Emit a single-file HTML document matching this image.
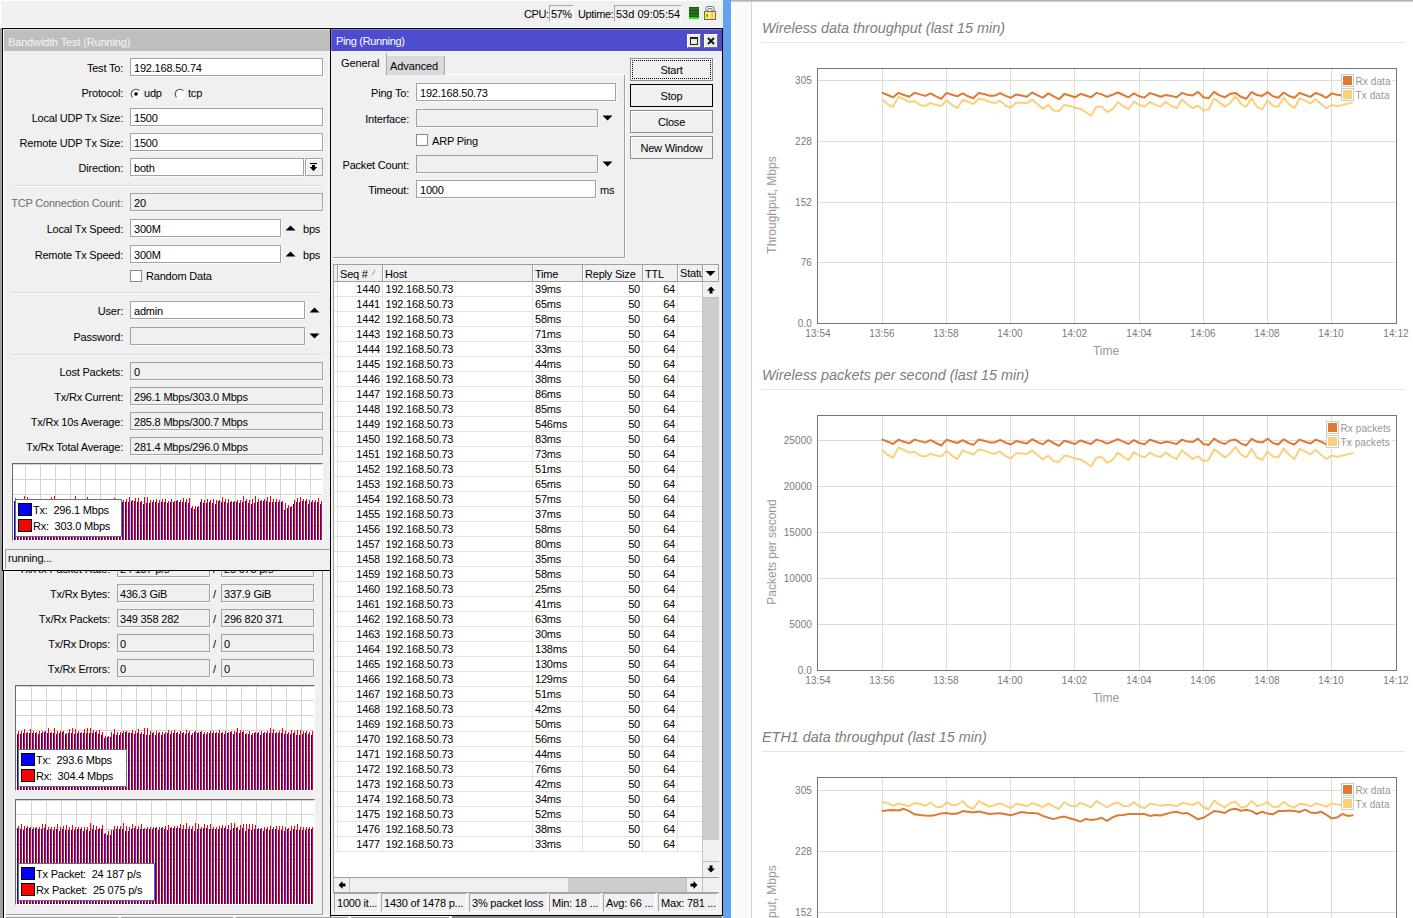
<!DOCTYPE html><html><head><meta charset="utf-8"><title>WinBox</title><style>
*{box-sizing:border-box;margin:0;padding:0}
html,body{width:1413px;height:918px;overflow:hidden;background:#f0f0f0}
body{position:relative;font-family:"Liberation Sans",sans-serif;font-size:11px;color:#000}
.a{position:absolute}
.t{position:absolute;white-space:nowrap;font-size:11px;line-height:14px;height:14px;letter-spacing:-0.2px}
.r{text-align:right}
.in{position:absolute;background:#fff;border:1px solid #a2a2a2;box-shadow:1px 1px 0 #fbfbfb;font-size:11px;line-height:16px;padding-top:1px;padding-left:3px;white-space:nowrap;letter-spacing:-0.2px;overflow:hidden}
.ro{background:#f0f0f0}
.sep{position:absolute;height:2px;border-top:1px solid #dadada;border-bottom:1px solid #fcfcfc}
.btn{position:absolute;width:83px;height:23px;border:1px solid #8e8e8e;background:#f0f0f0;text-align:center;line-height:22px;font-size:11px;letter-spacing:-0.2px;box-shadow:inset 1px 1px 0 #fff}
.cb{position:absolute;width:12px;height:12px;border:1px solid #8a8a8a;background:#fff}
.sw{position:absolute;width:14px;height:13px;border:1px solid #000}
.lg{position:absolute;background:#fff;border:1px solid #707070}
.gr{position:absolute;background:#fff;border-top:1px solid #696969;border-left:1px solid #696969;border-right:1px solid #fff;border-bottom:1px solid #fff;overflow:hidden}
.cl{position:absolute;font-size:10px;color:#7a7a7a;white-space:nowrap;line-height:12px;height:12px;letter-spacing:0.1px}
.ct{position:absolute;font-size:14.4px;font-style:italic;color:#7d7d7d;white-space:nowrap;line-height:18px;height:18px}
.hr{position:absolute;height:1px;background:#e4e4e4}
.sc{position:absolute;height:19px;border:1px solid #a8a8a8;border-right-color:#fff;border-bottom-color:#fff;font-size:11px;line-height:18px;padding-left:2px;white-space:nowrap;overflow:hidden;letter-spacing:-0.2px}
</style></head><body>
<div class="a" style="left:0px;top:0px;width:723px;height:28px;background:#f0f0f0;border-top:1px solid #fff;border-bottom:1px solid #fbfbfb;border-left:1px solid #fff"></div>
<div class="a" style="left:0px;top:28px;width:3px;height:890px;background:#a0a0a0"></div>
<div class="a" style="left:3px;top:560px;width:328px;height:358px;background:#f0f0f0;border-left:1px solid #000;border-right:1px solid #000"></div>
<div class="a" style="left:4px;top:560px;width:2px;height:358px;background:#fff"></div>
<div class="a" style="left:322px;top:571px;width:1px;height:343px;background:#a0a0a0"></div>
<div class="a" style="left:323px;top:571px;width:7px;height:343px;background:#f0f0f0"></div>
<div class="a" style="left:6px;top:914px;width:317px;height:1px;background:#a0a0a0"></div>
<div class="a" style="left:6px;top:915px;width:324px;height:1px;background:#fdfdfd"></div>
<div class="a" style="left:6px;top:917px;width:112px;height:1px;background:#a0a0a0"></div>
<div class="a" style="left:121px;top:917px;width:112px;height:1px;background:#a0a0a0"></div>
<div class="a" style="left:236px;top:917px;width:112px;height:1px;background:#a0a0a0"></div>
<div class="a" style="left:351px;top:917px;width:98px;height:1px;background:#a0a0a0"></div>
<div class="a" style="left:452px;top:916px;width:270px;height:2px;background:#8a8a8a"></div>
<div class="t r " style="left:-190px;width:300px;top:562px;">Tx/Rx Packet Rate:</div>
<div class="in ro" style="left:117px;top:559px;width:93px;height:18px;padding-left:2px">24 187 p/s</div>
<div class="t " style="left:213px;top:562px;">/</div>
<div class="in ro" style="left:221px;top:559px;width:93px;height:18px;padding-left:2px">25 075 p/s</div>
<div class="t r " style="left:-190px;width:300px;top:587px;">Tx/Rx Bytes:</div>
<div class="in ro" style="left:117px;top:584px;width:93px;height:18px;padding-left:2px">436.3 GiB</div>
<div class="t " style="left:213px;top:587px;">/</div>
<div class="in ro" style="left:221px;top:584px;width:93px;height:18px;padding-left:2px">337.9 GiB</div>
<div class="t r " style="left:-190px;width:300px;top:612px;">Tx/Rx Packets:</div>
<div class="in ro" style="left:117px;top:609px;width:93px;height:18px;padding-left:2px">349 358 282</div>
<div class="t " style="left:213px;top:612px;">/</div>
<div class="in ro" style="left:221px;top:609px;width:93px;height:18px;padding-left:2px">296 820 371</div>
<div class="t r " style="left:-190px;width:300px;top:637px;">Tx/Rx Drops:</div>
<div class="in ro" style="left:117px;top:634px;width:93px;height:18px;padding-left:2px">0</div>
<div class="t " style="left:213px;top:637px;">/</div>
<div class="in ro" style="left:221px;top:634px;width:93px;height:18px;padding-left:2px">0</div>
<div class="t r " style="left:-190px;width:300px;top:662px;">Tx/Rx Errors:</div>
<div class="in ro" style="left:117px;top:659px;width:93px;height:18px;padding-left:2px">0</div>
<div class="t " style="left:213px;top:662px;">/</div>
<div class="in ro" style="left:221px;top:659px;width:93px;height:18px;padding-left:2px">0</div>
<div class="gr" style="left:15px;top:685px;width:300px;height:106px"><svg width="298" height="104" shape-rendering="crispEdges" style="display:block"><path d="M15.5 0V104M30.5 0V104M45.5 0V104M60.5 0V104M75.5 0V104M90.5 0V104M105.5 0V104M120.5 0V104M135.5 0V104M150.5 0V104M165.5 0V104M180.5 0V104M195.5 0V104M210.5 0V104M225.5 0V104M240.5 0V104M255.5 0V104M270.5 0V104M285.5 0V104M0 0.5H298M0 14.5H298M0 29.5H298M0 44.5H298M0 59.5H298M0 74.5H298M0 89.5H298" stroke="#d4d4d4" stroke-width="1" fill="none"/><path d="M1.5 48V104M4.5 48V104M7.5 47V104M10.5 47V104M13.5 47V104M16.5 47V104M19.5 47V104M22.5 48V104M25.5 47V104M28.5 46V104M31.5 47V104M34.5 47V104M37.5 47V104M40.5 48V104M43.5 47V104M46.5 46V104M49.5 48V104M52.5 47V104M55.5 47V104M58.5 48V104M61.5 47V104M64.5 47V104M67.5 47V104M70.5 47V104M73.5 47V104M76.5 47V104M79.5 46V104M82.5 48V104M85.5 49V104M88.5 52V104M91.5 51V104M94.5 51V104M97.5 48V104M100.5 49V104M103.5 49V104M106.5 47V104M109.5 46V104M112.5 47V104M115.5 47V104M118.5 48V104M121.5 47V104M124.5 48V104M127.5 48V104M130.5 49V104M133.5 49V104M136.5 47V104M139.5 49V104M142.5 47V104M145.5 49V104M148.5 48V104M151.5 47V104M154.5 48V104M157.5 47V104M160.5 47V104M163.5 48V104M166.5 47V104M169.5 48V104M172.5 47V104M175.5 49V104M178.5 46V104M181.5 47V104M184.5 46V104M187.5 48V104M190.5 48V104M193.5 47V104M196.5 47V104M199.5 47V104M202.5 47V104M205.5 47V104M208.5 48V104M211.5 47V104M214.5 46V104M217.5 48V104M220.5 46V104M223.5 47V104M226.5 46V104M229.5 48V104M232.5 48V104M235.5 49V104M238.5 47V104M241.5 47V104M244.5 49V104M247.5 47V104M250.5 47V104M253.5 47V104M256.5 47V104M259.5 47V104M262.5 47V104M265.5 47V104M268.5 48V104M271.5 48V104M274.5 48V104M277.5 47V104M280.5 49V104M283.5 49V104M286.5 48V104M289.5 47V104M292.5 48V104M295.5 49V104" stroke="#0000ff" stroke-width="1" fill="none"/><path d="M2.5 45V104M5.5 45V104M8.5 43V104M11.5 46V104M14.5 43V104M17.5 45V104M20.5 46V104M23.5 45V104M26.5 45V104M29.5 45V104M32.5 42V104M35.5 46V104M38.5 42V104M41.5 45V104M44.5 45V104M47.5 45V104M50.5 47V104M53.5 43V104M56.5 42V104M59.5 43V104M62.5 45V104M65.5 46V104M68.5 43V104M71.5 42V104M74.5 42V104M77.5 44V104M80.5 45V104M83.5 44V104M86.5 46V104M89.5 50V104M92.5 50V104M95.5 46V104M98.5 43V104M101.5 46V104M104.5 46V104M107.5 45V104M110.5 45V104M113.5 46V104M116.5 44V104M119.5 45V104M122.5 43V104M125.5 46V104M128.5 42V104M131.5 42V104M134.5 45V104M137.5 46V104M140.5 45V104M143.5 46V104M146.5 46V104M149.5 46V104M152.5 44V104M155.5 45V104M158.5 44V104M161.5 46V104M164.5 45V104M167.5 46V104M170.5 44V104M173.5 45V104M176.5 47V104M179.5 45V104M182.5 46V104M185.5 45V104M188.5 46V104M191.5 46V104M194.5 45V104M197.5 45V104M200.5 46V104M203.5 44V104M206.5 46V104M209.5 45V104M212.5 46V104M215.5 45V104M218.5 45V104M221.5 42V104M224.5 44V104M227.5 45V104M230.5 47V104M233.5 45V104M236.5 47V104M239.5 46V104M242.5 46V104M245.5 45V104M248.5 46V104M251.5 45V104M254.5 42V104M257.5 43V104M260.5 46V104M263.5 45V104M266.5 42V104M269.5 45V104M272.5 46V104M275.5 44V104M278.5 45V104M281.5 44V104M284.5 44V104M287.5 45V104M290.5 45V104M293.5 46V104M296.5 45V104" stroke="#ff0000" stroke-width="1" fill="none"/></svg></div>
<div class="lg" style="left:18px;top:749px;width:109px;height:38px"></div>
<div class="sw" style="left:21px;top:753px;background:#0000ff"></div>
<div class="sw" style="left:21px;top:769px;background:#ff0000"></div>
<div class="t " style="left:36px;top:753px;">Tx:&nbsp; 293.6 Mbps</div>
<div class="t " style="left:36px;top:769px;">Rx:&nbsp; 304.4 Mbps</div>
<div class="gr" style="left:15px;top:799px;width:300px;height:106px"><svg width="298" height="104" shape-rendering="crispEdges" style="display:block"><path d="M15.5 0V104M30.5 0V104M45.5 0V104M60.5 0V104M75.5 0V104M90.5 0V104M105.5 0V104M120.5 0V104M135.5 0V104M150.5 0V104M165.5 0V104M180.5 0V104M195.5 0V104M210.5 0V104M225.5 0V104M240.5 0V104M255.5 0V104M270.5 0V104M285.5 0V104M0 0.5H298M0 14.5H298M0 29.5H298M0 44.5H298M0 59.5H298M0 74.5H298M0 89.5H298" stroke="#d4d4d4" stroke-width="1" fill="none"/><path d="M1.5 28V104M4.5 29V104M7.5 30V104M10.5 28V104M13.5 28V104M16.5 29V104M19.5 28V104M22.5 29V104M25.5 29V104M28.5 28V104M31.5 30V104M34.5 29V104M37.5 30V104M40.5 29V104M43.5 31V104M46.5 29V104M49.5 30V104M52.5 30V104M55.5 30V104M58.5 30V104M61.5 29V104M64.5 29V104M67.5 31V104M70.5 30V104M73.5 31V104M76.5 29V104M79.5 30V104M82.5 29V104M85.5 29V104M88.5 34V104M91.5 35V104M94.5 35V104M97.5 30V104M100.5 29V104M103.5 29V104M106.5 29V104M109.5 31V104M112.5 31V104M115.5 29V104M118.5 28V104M121.5 29V104M124.5 29V104M127.5 29V104M130.5 29V104M133.5 29V104M136.5 29V104M139.5 28V104M142.5 30V104M145.5 28V104M148.5 29V104M151.5 30V104M154.5 28V104M157.5 28V104M160.5 28V104M163.5 28V104M166.5 29V104M169.5 29V104M172.5 29V104M175.5 29V104M178.5 31V104M181.5 29V104M184.5 29V104M187.5 28V104M190.5 28V104M193.5 29V104M196.5 29V104M199.5 29V104M202.5 29V104M205.5 28V104M208.5 28V104M211.5 29V104M214.5 30V104M217.5 28V104M220.5 28V104M223.5 30V104M226.5 28V104M229.5 31V104M232.5 29V104M235.5 30V104M238.5 29V104M241.5 29V104M244.5 29V104M247.5 31V104M250.5 29V104M253.5 30V104M256.5 29V104M259.5 29V104M262.5 30V104M265.5 30V104M268.5 31V104M271.5 29V104M274.5 31V104M277.5 29V104M280.5 30V104M283.5 30V104M286.5 30V104M289.5 30V104M292.5 29V104M295.5 29V104" stroke="#0000ff" stroke-width="1" fill="none"/><path d="M2.5 26V104M5.5 24V104M8.5 26V104M11.5 26V104M14.5 27V104M17.5 27V104M20.5 27V104M23.5 27V104M26.5 24V104M29.5 24V104M32.5 27V104M35.5 27V104M38.5 27V104M41.5 24V104M44.5 27V104M47.5 26V104M50.5 25V104M53.5 27V104M56.5 25V104M59.5 27V104M62.5 27V104M65.5 27V104M68.5 27V104M71.5 27V104M74.5 23V104M77.5 25V104M80.5 26V104M83.5 28V104M86.5 25V104M89.5 33V104M92.5 31V104M95.5 30V104M98.5 26V104M101.5 26V104M104.5 26V104M107.5 23V104M110.5 26V104M113.5 27V104M116.5 24V104M119.5 26V104M122.5 26V104M125.5 24V104M128.5 28V104M131.5 27V104M134.5 27V104M137.5 27V104M140.5 27V104M143.5 27V104M146.5 27V104M149.5 26V104M152.5 25V104M155.5 27V104M158.5 26V104M161.5 26V104M164.5 24V104M167.5 25V104M170.5 23V104M173.5 26V104M176.5 26V104M179.5 23V104M182.5 24V104M185.5 27V104M188.5 24V104M191.5 25V104M194.5 24V104M197.5 27V104M200.5 27V104M203.5 26V104M206.5 25V104M209.5 26V104M212.5 25V104M215.5 23V104M218.5 23V104M221.5 27V104M224.5 25V104M227.5 24V104M230.5 24V104M233.5 24V104M236.5 24V104M239.5 25V104M242.5 28V104M245.5 28V104M248.5 27V104M251.5 27V104M254.5 26V104M257.5 27V104M260.5 26V104M263.5 26V104M266.5 26V104M269.5 27V104M272.5 28V104M275.5 26V104M278.5 26V104M281.5 24V104M284.5 27V104M287.5 27V104M290.5 27V104M293.5 27V104M296.5 27V104" stroke="#ff0000" stroke-width="1" fill="none"/></svg></div>
<div class="lg" style="left:18px;top:863px;width:137px;height:38px"></div>
<div class="sw" style="left:21px;top:867px;background:#0000ff"></div>
<div class="sw" style="left:21px;top:883px;background:#ff0000"></div>
<div class="t " style="left:36px;top:867px;">Tx Packet:&nbsp; 24 187 p/s</div>
<div class="t " style="left:36px;top:883px;">Rx Packet:&nbsp; 25 075 p/s</div>
<div class="a" style="left:2px;top:28px;width:329px;height:543px;background:#f0f0f0;border:1px solid #000"></div>
<div class="a" style="left:3px;top:29px;width:327px;height:1px;background:#dedede"></div>
<div class="a" style="left:3px;top:30px;width:1px;height:540px;background:#fff"></div>
<div class="a" style="left:4px;top:30px;width:326px;height:21px;background:#bebebe"></div>
<div class="t " style="left:8px;top:35px;color:#f4f4f4;letter-spacing:-0.15px">Bandwidth Test (Running)</div>
<div class="t r " style="left:-177px;width:300px;top:61px;">Test To:</div>
<div class="in" style="left:130px;top:58px;width:193px;height:18px;">192.168.50.74</div>
<div class="t r " style="left:-177px;width:300px;top:86px;">Protocol:</div>
<svg class="a" style="left:128.6px;top:86.6px" width="14" height="14"><circle cx="7" cy="7" r="4.3" fill="#fff"/><path d="M3.6 10.4A4.7 4.7 0 0 1 10.4 3.6" stroke="#505050" stroke-width="1.1" fill="none"/><path d="M10.6 3.8A4.7 4.7 0 0 1 3.8 10.6" stroke="#fff" stroke-width="1.1" fill="none"/><circle cx="7" cy="7" r="1.8" fill="#000"/></svg>
<div class="t " style="left:144px;top:86px;">udp</div>
<svg class="a" style="left:172.6px;top:86.6px" width="14" height="14"><circle cx="7" cy="7" r="4.3" fill="#fff"/><path d="M3.6 10.4A4.7 4.7 0 0 1 10.4 3.6" stroke="#505050" stroke-width="1.1" fill="none"/><path d="M10.6 3.8A4.7 4.7 0 0 1 3.8 10.6" stroke="#fff" stroke-width="1.1" fill="none"/></svg>
<div class="t " style="left:188px;top:86px;">tcp</div>
<div class="t r " style="left:-177px;width:300px;top:111px;">Local UDP Tx Size:</div>
<div class="in" style="left:130px;top:108px;width:193px;height:18px;">1500</div>
<div class="t r " style="left:-177px;width:300px;top:136px;">Remote UDP Tx Size:</div>
<div class="in" style="left:130px;top:133px;width:193px;height:18px;">1500</div>
<div class="t r " style="left:-177px;width:300px;top:161px;">Direction:</div>
<div class="in" style="left:130px;top:158px;width:174px;height:18px;">both</div>
<div class="a" style="left:305px;top:158px;width:18px;height:18px;border:1px solid #a2a2a2;background:#f0f0f0;box-shadow:inset 1px 1px 0 #fff"></div>
<svg class="a" style="left:309px;top:162px" width="10" height="10"><rect x="1" y="1" width="7" height="1.1" fill="#000"/><rect x="3" y="3" width="3" height="2.2" fill="#000"/><polygon points="0.8,5 8.2,5 4.5,9.2" fill="#000"/></svg>
<div class="sep" style="left:12px;top:185px;width:311px"></div>
<div class="t r " style="left:-177px;width:300px;top:196px;color:#6d6d6d">TCP Connection Count:</div>
<div class="in ro" style="left:130px;top:193px;width:193px;height:18px;">20</div>
<div class="t r " style="left:-177px;width:300px;top:222px;">Local Tx Speed:</div>
<div class="in" style="left:130px;top:219px;width:151px;height:18px;">300M</div>
<svg class="a" style="left:0;top:0" width="1" height="1" overflow="visible"><polygon points="285.5,230.5 295.5,230.5 290.5,225.5" fill="#000"/></svg>
<div class="t " style="left:303px;top:222px;">bps</div>
<div class="t r " style="left:-177px;width:300px;top:248px;">Remote Tx Speed:</div>
<div class="in" style="left:130px;top:245px;width:151px;height:18px;">300M</div>
<svg class="a" style="left:0;top:0" width="1" height="1" overflow="visible"><polygon points="285.5,256.5 295.5,256.5 290.5,251.5" fill="#000"/></svg>
<div class="t " style="left:303px;top:248px;">bps</div>
<div class="cb" style="left:130px;top:270px"></div>
<div class="t " style="left:146px;top:269px;">Random Data</div>
<div class="sep" style="left:12px;top:292px;width:311px"></div>
<div class="t r " style="left:-177px;width:300px;top:304px;">User:</div>
<div class="in" style="left:130px;top:301px;width:175px;height:18px;">admin</div>
<svg class="a" style="left:0;top:0" width="1" height="1" overflow="visible"><polygon points="309.5,312.5 319.5,312.5 314.5,307.5" fill="#000"/></svg>
<div class="t r " style="left:-177px;width:300px;top:330px;">Password:</div>
<div class="in ro" style="left:130px;top:327px;width:175px;height:18px;"></div>
<svg class="a" style="left:0;top:0" width="1" height="1" overflow="visible"><polygon points="309.5,333.5 319.5,333.5 314.5,338.5" fill="#000"/></svg>
<div class="sep" style="left:12px;top:354px;width:311px"></div>
<div class="t r " style="left:-177px;width:300px;top:365px;">Lost Packets:</div>
<div class="in ro" style="left:130px;top:362px;width:193px;height:18px;">0</div>
<div class="t r " style="left:-177px;width:300px;top:390px;">Tx/Rx Current:</div>
<div class="in ro" style="left:130px;top:387px;width:193px;height:18px;">296.1 Mbps/303.0 Mbps</div>
<div class="t r " style="left:-177px;width:300px;top:415px;">Tx/Rx 10s Average:</div>
<div class="in ro" style="left:130px;top:412px;width:193px;height:18px;">285.8 Mbps/300.7 Mbps</div>
<div class="t r " style="left:-177px;width:300px;top:440px;">Tx/Rx Total Average:</div>
<div class="in ro" style="left:130px;top:437px;width:193px;height:18px;">281.4 Mbps/296.0 Mbps</div>
<div class="gr" style="left:12px;top:463px;width:311px;height:78px"><svg width="309" height="76" shape-rendering="crispEdges" style="display:block"><path d="M12.5 0V76M27.5 0V76M42.5 0V76M57.5 0V76M72.5 0V76M87.5 0V76M102.5 0V76M117.5 0V76M132.5 0V76M147.5 0V76M162.5 0V76M177.5 0V76M192.5 0V76M207.5 0V76M222.5 0V76M237.5 0V76M252.5 0V76M267.5 0V76M282.5 0V76M297.5 0V76M0 0.5H309M0 15.5H309M0 30.5H309M0 46.5H309M0 61.5H309" stroke="#d4d4d4" stroke-width="1" fill="none"/><path d="M1.5 37V76M4.5 40V76M7.5 39V76M10.5 37V76M13.5 39V76M16.5 38V76M19.5 38V76M22.5 38V76M25.5 39V76M28.5 38V76M31.5 38V76M34.5 39V76M37.5 38V76M40.5 37V76M43.5 40V76M46.5 38V76M49.5 38V76M52.5 39V76M55.5 39V76M58.5 38V76M61.5 38V76M64.5 38V76M67.5 39V76M70.5 40V76M73.5 39V76M76.5 39V76M79.5 38V76M82.5 37V76M85.5 38V76M88.5 39V76M91.5 38V76M94.5 39V76M97.5 37V76M100.5 39V76M103.5 37V76M106.5 39V76M109.5 38V76M112.5 38V76M115.5 38V76M118.5 37V76M121.5 37V76M124.5 38V76M127.5 38V76M130.5 40V76M133.5 39V76M136.5 39V76M139.5 38V76M142.5 38V76M145.5 39V76M148.5 38V76M151.5 38V76M154.5 39V76M157.5 38V76M160.5 38V76M163.5 37V76M166.5 38V76M169.5 38V76M172.5 38V76M175.5 39V76M178.5 44V76M181.5 45V76M184.5 43V76M187.5 38V76M190.5 39V76M193.5 39V76M196.5 38V76M199.5 39V76M202.5 40V76M205.5 37V76M208.5 38V76M211.5 38V76M214.5 39V76M217.5 38V76M220.5 38V76M223.5 38V76M226.5 39V76M229.5 38V76M232.5 37V76M235.5 39V76M238.5 40V76M241.5 39V76M244.5 38V76M247.5 37V76M250.5 37V76M253.5 37V76M256.5 38V76M259.5 38V76M262.5 38V76M265.5 38V76M268.5 38V76M271.5 46V76M274.5 44V76M277.5 43V76M280.5 40V76M283.5 38V76M286.5 38V76M289.5 37V76M292.5 37V76M295.5 40V76M298.5 38V76M301.5 38V76M304.5 38V76M307.5 40V76" stroke="#0000ff" stroke-width="1" fill="none"/><path d="M2.5 34V76M5.5 35V76M8.5 36V76M11.5 32V76M14.5 33V76M17.5 35V76M20.5 35V76M23.5 36V76M26.5 35V76M29.5 36V76M32.5 37V76M35.5 37V76M38.5 33V76M41.5 32V76M44.5 36V76M47.5 36V76M50.5 35V76M53.5 35V76M56.5 35V76M59.5 36V76M62.5 32V76M65.5 35V76M68.5 35V76M71.5 35V76M74.5 33V76M77.5 36V76M80.5 35V76M83.5 36V76M86.5 35V76M89.5 35V76M92.5 36V76M95.5 36V76M98.5 36V76M101.5 34V76M104.5 35V76M107.5 36V76M110.5 36V76M113.5 35V76M116.5 33V76M119.5 36V76M122.5 34V76M125.5 34V76M128.5 37V76M131.5 33V76M134.5 33V76M137.5 36V76M140.5 36V76M143.5 35V76M146.5 36V76M149.5 35V76M152.5 35V76M155.5 37V76M158.5 35V76M161.5 37V76M164.5 36V76M167.5 36V76M170.5 34V76M173.5 35V76M176.5 34V76M179.5 42V76M182.5 42V76M185.5 42V76M188.5 35V76M191.5 36V76M194.5 35V76M197.5 36V76M200.5 35V76M203.5 36V76M206.5 36V76M209.5 33V76M212.5 35V76M215.5 35V76M218.5 37V76M221.5 37V76M224.5 36V76M227.5 36V76M230.5 32V76M233.5 35V76M236.5 36V76M239.5 35V76M242.5 32V76M245.5 35V76M248.5 36V76M251.5 35V76M254.5 33V76M257.5 32V76M260.5 35V76M263.5 35V76M266.5 36V76M269.5 37V76M272.5 39V76M275.5 41V76M278.5 42V76M281.5 36V76M284.5 34V76M287.5 33V76M290.5 35V76M293.5 35V76M296.5 36V76M299.5 36V76M302.5 36V76M305.5 34V76M308.5 37V76" stroke="#ff0000" stroke-width="1" fill="none"/></svg></div>
<div class="lg" style="left:15px;top:499px;width:107px;height:38px"></div>
<div class="sw" style="left:18px;top:503px;background:#0000ff"></div>
<div class="sw" style="left:18px;top:519px;background:#ff0000"></div>
<div class="t " style="left:33px;top:503px;">Tx:&nbsp; 296.1 Mbps</div>
<div class="t " style="left:33px;top:519px;">Rx:&nbsp; 303.0 Mbps</div>
<div class="a" style="left:5px;top:549px;width:325px;height:20px;border-top:1px solid #a0a0a0;border-left:1px solid #a0a0a0;background:#f0f0f0"></div>
<div class="t " style="left:8px;top:551px;">running...</div>
<div class="a" style="left:330px;top:28px;width:393px;height:888px;background:#f0f0f0;border:1px solid #000"></div>
<div class="a" style="left:331px;top:29px;width:391px;height:22px;background:#4c4ccd;border-top:1px solid #7c7ce2;border-left:1px solid #7272dc"></div>
<div class="t " style="left:336px;top:34px;color:#fff;letter-spacing:-0.35px">Ping (Running)</div>
<div class="a" style="left:687px;top:34px;width:14px;height:14px;border:1px solid;border-color:#fff #6e6e6e #6e6e6e #fff;background:#ececec"></div>
<div class="a" style="left:690px;top:37px;width:8px;height:8px;border:1px solid #222;border-top-width:2px"></div>
<div class="a" style="left:704px;top:34px;width:14px;height:14px;border:1px solid;border-color:#fff #6e6e6e #6e6e6e #fff;background:#ececec"></div>
<svg class="a" style="left:707px;top:37px" width="8" height="8"><path d="M1 1L7 7M7 1L1 7" stroke="#111" stroke-width="1.8"/></svg>
<div class="a" style="left:333px;top:75px;width:292px;height:183px;border-right:1px solid #a0a0a0;border-bottom:1px solid #a0a0a0"></div>
<div class="a" style="left:333px;top:75px;width:293px;height:184px;border-right:1px solid #fff;border-bottom:1px solid #fff"></div>
<div class="a" style="left:444px;top:74px;width:181px;height:1px;background:#fff"></div>
<div class="a" style="left:386px;top:53px;width:1px;height:22px;background:#a8a8a8"></div>
<div class="a" style="left:386px;top:56px;width:59px;height:19px;background:#d9d9d9;border-left:1px solid #a8a8a8;border-right:1px solid #a8a8a8"></div>
<div class="t " style="left:341px;top:56px;letter-spacing:-0.1px">General</div>
<div class="t " style="left:390px;top:59px;letter-spacing:-0.1px">Advanced</div>
<div class="t r " style="left:109px;width:300px;top:86px;">Ping To:</div>
<div class="in" style="left:416px;top:83px;width:200px;height:18px;">192.168.50.73</div>
<div class="t r " style="left:109px;width:300px;top:112px;">Interface:</div>
<div class="in ro" style="left:416px;top:109px;width:182px;height:18px;"></div>
<svg class="a" style="left:0;top:0" width="1" height="1" overflow="visible"><polygon points="602.5,115.5 612.5,115.5 607.5,120.5" fill="#000"/></svg>
<div class="cb" style="left:416px;top:134px"></div>
<div class="t " style="left:432px;top:134px;">ARP Ping</div>
<div class="t r " style="left:109px;width:300px;top:158px;">Packet Count:</div>
<div class="in ro" style="left:416px;top:155px;width:182px;height:18px;"></div>
<svg class="a" style="left:0;top:0" width="1" height="1" overflow="visible"><polygon points="602.5,161.5 612.5,161.5 607.5,166.5" fill="#000"/></svg>
<div class="t r " style="left:109px;width:300px;top:183px;">Timeout:</div>
<div class="in" style="left:416px;top:180px;width:180px;height:18px;">1000</div>
<div class="t " style="left:600px;top:183px;">ms</div>
<div class="btn" style="left:630px;top:58px">Start</div>
<div class="a" style="left:632px;top:60px;width:79px;height:19px;border:1px dotted #000"></div>
<div class="btn" style="left:630px;top:84px;border-color:#000;box-shadow:none;">Stop</div>
<div class="btn" style="left:630px;top:110px">Close</div>
<div class="btn" style="left:630px;top:136px">New Window</div>
<div class="a" style="left:333px;top:264px;width:386px;height:629px;background:#fff;border:1px solid #a0a0a0"></div>
<div class="a" style="left:334px;top:265px;width:384px;height:17px;background:#f0f0f0;border-bottom:1px solid #a0a0a0"></div>
<div class="a" style="left:337px;top:265px;width:1px;height:16px;background:#a0a0a0"></div>
<div class="a" style="left:338px;top:265px;width:1px;height:16px;background:#fff"></div>
<div class="a" style="left:382px;top:265px;width:1px;height:16px;background:#a0a0a0"></div>
<div class="a" style="left:383px;top:265px;width:1px;height:16px;background:#fff"></div>
<div class="a" style="left:532px;top:265px;width:1px;height:16px;background:#a0a0a0"></div>
<div class="a" style="left:533px;top:265px;width:1px;height:16px;background:#fff"></div>
<div class="a" style="left:582px;top:265px;width:1px;height:16px;background:#a0a0a0"></div>
<div class="a" style="left:583px;top:265px;width:1px;height:16px;background:#fff"></div>
<div class="a" style="left:642px;top:265px;width:1px;height:16px;background:#a0a0a0"></div>
<div class="a" style="left:643px;top:265px;width:1px;height:16px;background:#fff"></div>
<div class="a" style="left:677px;top:265px;width:1px;height:16px;background:#a0a0a0"></div>
<div class="a" style="left:678px;top:265px;width:1px;height:16px;background:#fff"></div>
<div class="a" style="left:702px;top:265px;width:1px;height:16px;background:#a0a0a0"></div>
<div class="a" style="left:703px;top:265px;width:1px;height:16px;background:#fff"></div>
<div class="t " style="left:340px;top:267px;">Seq #</div>
<div class="t " style="left:385px;top:267px;">Host</div>
<div class="t " style="left:535px;top:267px;">Time</div>
<div class="t " style="left:585px;top:267px;">Reply Size</div>
<div class="t " style="left:645px;top:267px;">TTL</div>
<div class="t" style="left:680px;top:266px;width:22px;overflow:hidden">Status</div>
<svg class="a" style="left:371px;top:268px" width="9" height="9"><path d="M1 8L4.5 1" stroke="#a0a0a0" stroke-width="1"/><path d="M4.5 1L8 8H1" stroke="#fff" stroke-width="1" fill="none"/></svg>
<svg class="a" style="left:0;top:0" width="1" height="1" overflow="visible"><polygon points="705.5,271.0 715.5,271.0 710.5,276.0" fill="#000"/></svg>
<svg class="a" style="left:0;top:0" width="723" height="918" shape-rendering="crispEdges"><path d="M334 296.5H702M334 311.5H702M334 326.5H702M334 341.5H702M334 356.5H702M334 371.5H702M334 386.5H702M334 401.5H702M334 416.5H702M334 431.5H702M334 446.5H702M334 461.5H702M334 476.5H702M334 491.5H702M334 506.5H702M334 521.5H702M334 536.5H702M334 551.5H702M334 566.5H702M334 581.5H702M334 596.5H702M334 611.5H702M334 626.5H702M334 641.5H702M334 656.5H702M334 671.5H702M334 686.5H702M334 701.5H702M334 716.5H702M334 731.5H702M334 746.5H702M334 761.5H702M334 776.5H702M334 791.5H702M334 806.5H702M334 821.5H702M334 836.5H702M334 851.5H702M337.5 282V852M382.5 282V852M532.5 282V852M582.5 282V852M642.5 282V852M677.5 282V852" stroke="#e3e3e3" stroke-width="1" fill="none"/></svg>
<div class="t r" style="left:340px;width:40px;top:282px">1440</div><div class="t" style="left:385.5px;top:282px">192.168.50.73</div><div class="t" style="left:535px;top:282px">39ms</div><div class="t r" style="left:600px;width:40px;top:282px">50</div><div class="t r" style="left:635px;width:40px;top:282px">64</div><div class="t r" style="left:340px;width:40px;top:297px">1441</div><div class="t" style="left:385.5px;top:297px">192.168.50.73</div><div class="t" style="left:535px;top:297px">65ms</div><div class="t r" style="left:600px;width:40px;top:297px">50</div><div class="t r" style="left:635px;width:40px;top:297px">64</div><div class="t r" style="left:340px;width:40px;top:312px">1442</div><div class="t" style="left:385.5px;top:312px">192.168.50.73</div><div class="t" style="left:535px;top:312px">58ms</div><div class="t r" style="left:600px;width:40px;top:312px">50</div><div class="t r" style="left:635px;width:40px;top:312px">64</div><div class="t r" style="left:340px;width:40px;top:327px">1443</div><div class="t" style="left:385.5px;top:327px">192.168.50.73</div><div class="t" style="left:535px;top:327px">71ms</div><div class="t r" style="left:600px;width:40px;top:327px">50</div><div class="t r" style="left:635px;width:40px;top:327px">64</div><div class="t r" style="left:340px;width:40px;top:342px">1444</div><div class="t" style="left:385.5px;top:342px">192.168.50.73</div><div class="t" style="left:535px;top:342px">33ms</div><div class="t r" style="left:600px;width:40px;top:342px">50</div><div class="t r" style="left:635px;width:40px;top:342px">64</div><div class="t r" style="left:340px;width:40px;top:357px">1445</div><div class="t" style="left:385.5px;top:357px">192.168.50.73</div><div class="t" style="left:535px;top:357px">44ms</div><div class="t r" style="left:600px;width:40px;top:357px">50</div><div class="t r" style="left:635px;width:40px;top:357px">64</div><div class="t r" style="left:340px;width:40px;top:372px">1446</div><div class="t" style="left:385.5px;top:372px">192.168.50.73</div><div class="t" style="left:535px;top:372px">38ms</div><div class="t r" style="left:600px;width:40px;top:372px">50</div><div class="t r" style="left:635px;width:40px;top:372px">64</div><div class="t r" style="left:340px;width:40px;top:387px">1447</div><div class="t" style="left:385.5px;top:387px">192.168.50.73</div><div class="t" style="left:535px;top:387px">86ms</div><div class="t r" style="left:600px;width:40px;top:387px">50</div><div class="t r" style="left:635px;width:40px;top:387px">64</div><div class="t r" style="left:340px;width:40px;top:402px">1448</div><div class="t" style="left:385.5px;top:402px">192.168.50.73</div><div class="t" style="left:535px;top:402px">85ms</div><div class="t r" style="left:600px;width:40px;top:402px">50</div><div class="t r" style="left:635px;width:40px;top:402px">64</div><div class="t r" style="left:340px;width:40px;top:417px">1449</div><div class="t" style="left:385.5px;top:417px">192.168.50.73</div><div class="t" style="left:535px;top:417px">546ms</div><div class="t r" style="left:600px;width:40px;top:417px">50</div><div class="t r" style="left:635px;width:40px;top:417px">64</div><div class="t r" style="left:340px;width:40px;top:432px">1450</div><div class="t" style="left:385.5px;top:432px">192.168.50.73</div><div class="t" style="left:535px;top:432px">83ms</div><div class="t r" style="left:600px;width:40px;top:432px">50</div><div class="t r" style="left:635px;width:40px;top:432px">64</div><div class="t r" style="left:340px;width:40px;top:447px">1451</div><div class="t" style="left:385.5px;top:447px">192.168.50.73</div><div class="t" style="left:535px;top:447px">73ms</div><div class="t r" style="left:600px;width:40px;top:447px">50</div><div class="t r" style="left:635px;width:40px;top:447px">64</div><div class="t r" style="left:340px;width:40px;top:462px">1452</div><div class="t" style="left:385.5px;top:462px">192.168.50.73</div><div class="t" style="left:535px;top:462px">51ms</div><div class="t r" style="left:600px;width:40px;top:462px">50</div><div class="t r" style="left:635px;width:40px;top:462px">64</div><div class="t r" style="left:340px;width:40px;top:477px">1453</div><div class="t" style="left:385.5px;top:477px">192.168.50.73</div><div class="t" style="left:535px;top:477px">65ms</div><div class="t r" style="left:600px;width:40px;top:477px">50</div><div class="t r" style="left:635px;width:40px;top:477px">64</div><div class="t r" style="left:340px;width:40px;top:492px">1454</div><div class="t" style="left:385.5px;top:492px">192.168.50.73</div><div class="t" style="left:535px;top:492px">57ms</div><div class="t r" style="left:600px;width:40px;top:492px">50</div><div class="t r" style="left:635px;width:40px;top:492px">64</div><div class="t r" style="left:340px;width:40px;top:507px">1455</div><div class="t" style="left:385.5px;top:507px">192.168.50.73</div><div class="t" style="left:535px;top:507px">37ms</div><div class="t r" style="left:600px;width:40px;top:507px">50</div><div class="t r" style="left:635px;width:40px;top:507px">64</div><div class="t r" style="left:340px;width:40px;top:522px">1456</div><div class="t" style="left:385.5px;top:522px">192.168.50.73</div><div class="t" style="left:535px;top:522px">58ms</div><div class="t r" style="left:600px;width:40px;top:522px">50</div><div class="t r" style="left:635px;width:40px;top:522px">64</div><div class="t r" style="left:340px;width:40px;top:537px">1457</div><div class="t" style="left:385.5px;top:537px">192.168.50.73</div><div class="t" style="left:535px;top:537px">80ms</div><div class="t r" style="left:600px;width:40px;top:537px">50</div><div class="t r" style="left:635px;width:40px;top:537px">64</div><div class="t r" style="left:340px;width:40px;top:552px">1458</div><div class="t" style="left:385.5px;top:552px">192.168.50.73</div><div class="t" style="left:535px;top:552px">35ms</div><div class="t r" style="left:600px;width:40px;top:552px">50</div><div class="t r" style="left:635px;width:40px;top:552px">64</div><div class="t r" style="left:340px;width:40px;top:567px">1459</div><div class="t" style="left:385.5px;top:567px">192.168.50.73</div><div class="t" style="left:535px;top:567px">58ms</div><div class="t r" style="left:600px;width:40px;top:567px">50</div><div class="t r" style="left:635px;width:40px;top:567px">64</div><div class="t r" style="left:340px;width:40px;top:582px">1460</div><div class="t" style="left:385.5px;top:582px">192.168.50.73</div><div class="t" style="left:535px;top:582px">25ms</div><div class="t r" style="left:600px;width:40px;top:582px">50</div><div class="t r" style="left:635px;width:40px;top:582px">64</div><div class="t r" style="left:340px;width:40px;top:597px">1461</div><div class="t" style="left:385.5px;top:597px">192.168.50.73</div><div class="t" style="left:535px;top:597px">41ms</div><div class="t r" style="left:600px;width:40px;top:597px">50</div><div class="t r" style="left:635px;width:40px;top:597px">64</div><div class="t r" style="left:340px;width:40px;top:612px">1462</div><div class="t" style="left:385.5px;top:612px">192.168.50.73</div><div class="t" style="left:535px;top:612px">63ms</div><div class="t r" style="left:600px;width:40px;top:612px">50</div><div class="t r" style="left:635px;width:40px;top:612px">64</div><div class="t r" style="left:340px;width:40px;top:627px">1463</div><div class="t" style="left:385.5px;top:627px">192.168.50.73</div><div class="t" style="left:535px;top:627px">30ms</div><div class="t r" style="left:600px;width:40px;top:627px">50</div><div class="t r" style="left:635px;width:40px;top:627px">64</div><div class="t r" style="left:340px;width:40px;top:642px">1464</div><div class="t" style="left:385.5px;top:642px">192.168.50.73</div><div class="t" style="left:535px;top:642px">138ms</div><div class="t r" style="left:600px;width:40px;top:642px">50</div><div class="t r" style="left:635px;width:40px;top:642px">64</div><div class="t r" style="left:340px;width:40px;top:657px">1465</div><div class="t" style="left:385.5px;top:657px">192.168.50.73</div><div class="t" style="left:535px;top:657px">130ms</div><div class="t r" style="left:600px;width:40px;top:657px">50</div><div class="t r" style="left:635px;width:40px;top:657px">64</div><div class="t r" style="left:340px;width:40px;top:672px">1466</div><div class="t" style="left:385.5px;top:672px">192.168.50.73</div><div class="t" style="left:535px;top:672px">129ms</div><div class="t r" style="left:600px;width:40px;top:672px">50</div><div class="t r" style="left:635px;width:40px;top:672px">64</div><div class="t r" style="left:340px;width:40px;top:687px">1467</div><div class="t" style="left:385.5px;top:687px">192.168.50.73</div><div class="t" style="left:535px;top:687px">51ms</div><div class="t r" style="left:600px;width:40px;top:687px">50</div><div class="t r" style="left:635px;width:40px;top:687px">64</div><div class="t r" style="left:340px;width:40px;top:702px">1468</div><div class="t" style="left:385.5px;top:702px">192.168.50.73</div><div class="t" style="left:535px;top:702px">42ms</div><div class="t r" style="left:600px;width:40px;top:702px">50</div><div class="t r" style="left:635px;width:40px;top:702px">64</div><div class="t r" style="left:340px;width:40px;top:717px">1469</div><div class="t" style="left:385.5px;top:717px">192.168.50.73</div><div class="t" style="left:535px;top:717px">50ms</div><div class="t r" style="left:600px;width:40px;top:717px">50</div><div class="t r" style="left:635px;width:40px;top:717px">64</div><div class="t r" style="left:340px;width:40px;top:732px">1470</div><div class="t" style="left:385.5px;top:732px">192.168.50.73</div><div class="t" style="left:535px;top:732px">56ms</div><div class="t r" style="left:600px;width:40px;top:732px">50</div><div class="t r" style="left:635px;width:40px;top:732px">64</div><div class="t r" style="left:340px;width:40px;top:747px">1471</div><div class="t" style="left:385.5px;top:747px">192.168.50.73</div><div class="t" style="left:535px;top:747px">44ms</div><div class="t r" style="left:600px;width:40px;top:747px">50</div><div class="t r" style="left:635px;width:40px;top:747px">64</div><div class="t r" style="left:340px;width:40px;top:762px">1472</div><div class="t" style="left:385.5px;top:762px">192.168.50.73</div><div class="t" style="left:535px;top:762px">76ms</div><div class="t r" style="left:600px;width:40px;top:762px">50</div><div class="t r" style="left:635px;width:40px;top:762px">64</div><div class="t r" style="left:340px;width:40px;top:777px">1473</div><div class="t" style="left:385.5px;top:777px">192.168.50.73</div><div class="t" style="left:535px;top:777px">42ms</div><div class="t r" style="left:600px;width:40px;top:777px">50</div><div class="t r" style="left:635px;width:40px;top:777px">64</div><div class="t r" style="left:340px;width:40px;top:792px">1474</div><div class="t" style="left:385.5px;top:792px">192.168.50.73</div><div class="t" style="left:535px;top:792px">34ms</div><div class="t r" style="left:600px;width:40px;top:792px">50</div><div class="t r" style="left:635px;width:40px;top:792px">64</div><div class="t r" style="left:340px;width:40px;top:807px">1475</div><div class="t" style="left:385.5px;top:807px">192.168.50.73</div><div class="t" style="left:535px;top:807px">52ms</div><div class="t r" style="left:600px;width:40px;top:807px">50</div><div class="t r" style="left:635px;width:40px;top:807px">64</div><div class="t r" style="left:340px;width:40px;top:822px">1476</div><div class="t" style="left:385.5px;top:822px">192.168.50.73</div><div class="t" style="left:535px;top:822px">38ms</div><div class="t r" style="left:600px;width:40px;top:822px">50</div><div class="t r" style="left:635px;width:40px;top:822px">64</div><div class="t r" style="left:340px;width:40px;top:837px">1477</div><div class="t" style="left:385.5px;top:837px">192.168.50.73</div><div class="t" style="left:535px;top:837px">33ms</div><div class="t r" style="left:600px;width:40px;top:837px">50</div><div class="t r" style="left:635px;width:40px;top:837px">64</div>
<div class="a" style="left:702px;top:282px;width:1px;height:595px;background:#c4c4c4"></div>
<div class="a" style="left:703px;top:282px;width:16px;height:595px;background:#cdcdcd"></div>
<div class="a" style="left:703px;top:282px;width:16px;height:16px;background:#f0f0f0;border-bottom:1px solid #c0c0c0"></div>
<svg class="a" style="left:706px;top:285px" width="10" height="10"><polygon points="5,1.5 9,5.5 1,5.5" fill="#000"/><rect x="3.5" y="5" width="3" height="3.5" fill="#000"/></svg>
<div class="a" style="left:703px;top:840px;width:16px;height:21px;background:#f0f0f0"></div>
<div class="a" style="left:703px;top:861px;width:16px;height:16px;background:#f0f0f0;border-top:1px solid #c0c0c0"></div>
<svg class="a" style="left:706px;top:864px" width="10" height="10"><polygon points="5,8.5 9,4.5 1,4.5" fill="#000"/><rect x="3.5" y="1.5" width="3" height="3.5" fill="#000"/></svg>
<div class="a" style="left:334px;top:877px;width:385px;height:15px;background:#f0f0f0;border-top:1px solid #a0a0a0"></div>
<div class="a" style="left:568px;top:878px;width:118px;height:14px;background:#cdcdcd"></div>
<div class="a" style="left:349px;top:878px;width:1px;height:14px;background:#c0c0c0"></div>
<div class="a" style="left:686px;top:878px;width:1px;height:14px;background:#c0c0c0"></div>
<div class="a" style="left:702px;top:878px;width:1px;height:14px;background:#c0c0c0"></div>
<svg class="a" style="left:337px;top:880px" width="10" height="10"><polygon points="1.5,5 5.5,1 5.5,9" fill="#000"/><rect x="5" y="3.5" width="3.5" height="3" fill="#000"/></svg>
<svg class="a" style="left:689px;top:880px" width="10" height="10"><polygon points="8.5,5 4.5,1 4.5,9" fill="#000"/><rect x="1.5" y="3.5" width="3.5" height="3" fill="#000"/></svg>
<div class="sc" style="left:334px;top:893px;width:45px">1000 it...</div>
<div class="sc" style="left:381px;top:893px;width:86px">1430 of 1478 p...</div>
<div class="sc" style="left:469px;top:893px;width:79px">3% packet loss</div>
<div class="sc" style="left:549px;top:893px;width:52px">Min: 18 ...</div>
<div class="sc" style="left:603px;top:893px;width:53px">Avg: 66 ...</div>
<div class="sc" style="left:658px;top:893px;width:60px">Max: 781 ...</div>
<div class="t " style="left:524px;top:7px;letter-spacing:-0.4px">CPU:</div>
<div class="a" style="left:549px;top:5px;width:25px;height:17px;border:1px solid #a8a8a8;border-right-color:#fff;border-bottom-color:#fff"></div>
<div class="t " style="left:551px;top:7px;letter-spacing:-0.5px">57%</div>
<div class="t " style="left:578px;top:7px;letter-spacing:-0.35px">Uptime:</div>
<div class="a" style="left:614px;top:5px;width:68px;height:17px;border:1px solid #a8a8a8;border-right-color:#fff;border-bottom-color:#fff"></div>
<div class="t " style="left:616px;top:7px;letter-spacing:0">53d 09:05:54</div>
<div class="a" style="left:689px;top:7px;width:10px;height:12px;background:repeating-linear-gradient(#1f4d12 0 1px,#2a6f1c 1px 3px)"></div>
<div class="a" style="left:689px;top:17px;width:10px;height:2px;background:#22e426"></div>
<svg class="a" style="left:703px;top:5px" width="14" height="16"><path d="M3 7V3.4Q3 1.5 5 1.5H9Q11 1.5 11 3.4V7" stroke="#757575" stroke-width="1" fill="#fff"/><path d="M5 7V4.2Q5 3.5 5.8 3.5H8.2Q9 3.5 9 4.2V7" stroke="#757575" stroke-width="1" fill="#f0f0f0"/><rect x="1.5" y="6.5" width="11" height="8" fill="#ffe545" stroke="#6c6c6c" stroke-width="1"/><rect x="5.5" y="7" width="3" height="7" fill="#ffe98c"/><rect x="8.6" y="7" width="1.1" height="7" fill="#ffb63e"/><rect x="10.5" y="7" width="1" height="7" fill="#fff08a"/><rect x="3.6" y="9.3" width="1.1" height="2.4" fill="#5c4a14"/></svg>
<div class="a" style="left:723px;top:0px;width:8px;height:918px;background:#63a2ee"></div>
<div class="a" style="left:731px;top:0px;width:682px;height:918px;background:#fff"></div>
<div class="a" style="left:731px;top:0px;width:682px;height:2px;background:linear-gradient(#a8a8a8,#d8d8d8)"></div>
<div class="a" style="left:731px;top:2px;width:20px;height:916px;background:#fafafa"></div>
<div class="a" style="left:751px;top:2px;width:1px;height:916px;background:#d4d4d4"></div>
<div class="ct" style="left:762px;top:19px">Wireless data throughput (last 15 min)</div>
<div class="hr" style="left:762px;top:42px;width:643px"></div>
<svg class="a" style="left:0;top:0" width="1413" height="918"><path d="M882.5 68V323M946.5 68V323M1010.5 68V323M1074.5 68V323M1139.5 68V323M1203.5 68V323M1267.5 68V323M1331.5 68V323M817 80.5H1397M817 141.5H1397M817 202.5H1397M817 262.5H1397M817 323.5H1397" stroke="#dcdcdc" stroke-width="1" fill="none" shape-rendering="crispEdges"/><polyline points="882.4,99.6 887.8,104.3 893.1,106.8 898.5,96.7 903.8,99.2 909.2,102.0 914.5,101.1 919.9,104.9 925.2,105.9 930.6,103.0 935.9,104.9 941.3,105.9 946.6,100.1 952.0,104.9 957.3,108.2 962.7,99.7 968.0,101.7 973.4,104.0 978.7,98.8 984.1,99.7 989.4,102.0 994.8,103.0 1000.1,100.7 1005.5,105.5 1010.8,107.8 1016.2,102.4 1021.5,102.8 1026.9,103.2 1032.2,99.7 1037.6,104.3 1042.9,108.7 1048.3,104.9 1053.6,110.6 1059.0,111.0 1064.3,104.9 1069.7,105.9 1075.0,107.8 1080.4,108.7 1085.7,112.0 1091.1,115.8 1096.4,106.8 1101.8,106.4 1107.1,112.0 1112.5,109.3 1117.9,102.0 1123.2,106.2 1128.6,109.3 1133.8,101.7 1139.2,104.9 1144.5,106.8 1149.9,102.0 1155.2,104.9 1160.6,106.4 1165.9,101.7 1171.3,105.9 1176.6,108.2 1182.0,99.6 1187.3,104.0 1192.7,108.2 1198.0,105.5 1203.4,110.6 1208.7,109.3 1214.1,98.6 1219.4,102.4 1224.8,106.8 1230.1,103.0 1235.5,96.3 1240.8,103.6 1246.2,106.8 1251.5,98.2 1256.9,106.8 1262.2,109.3 1267.6,100.5 1272.9,105.9 1278.3,106.8 1283.6,97.8 1289.0,104.0 1294.3,108.3 1299.7,98.2 1305.0,100.7 1310.4,103.6 1315.7,99.2 1321.1,104.0 1326.4,108.3 1331.8,104.9 1337.1,106.2 1352.6,102.4" fill="none" stroke="#fbd07a" stroke-width="2" stroke-linejoin="round" stroke-linecap="round"/><polyline points="882.4,92.9 887.8,95.0 893.1,97.3 898.5,92.9 903.8,95.0 909.2,96.7 914.5,92.9 919.9,94.4 925.2,95.9 930.6,93.4 935.9,96.3 941.3,98.8 946.6,92.9 952.0,94.8 957.3,96.3 962.7,93.4 968.0,96.3 973.4,98.2 978.7,92.9 984.1,94.0 989.4,95.7 994.8,95.7 1000.1,93.1 1005.5,95.9 1010.8,97.8 1016.2,94.4 1021.5,95.5 1026.9,96.7 1032.2,92.5 1037.6,95.4 1042.9,97.6 1048.3,93.4 1053.6,96.3 1059.0,99.2 1064.3,94.0 1069.7,95.5 1075.0,97.3 1080.4,93.8 1085.7,95.5 1091.1,97.3 1096.4,92.9 1101.8,94.4 1107.1,96.9 1112.5,94.8 1117.9,92.5 1123.2,95.0 1128.6,97.3 1133.8,93.4 1139.2,96.3 1144.5,97.6 1149.9,93.1 1155.2,94.8 1160.6,96.7 1165.9,95.0 1171.3,95.9 1176.6,97.3 1182.0,92.9 1187.3,94.8 1192.7,95.4 1198.0,91.9 1203.4,97.3 1208.7,98.2 1214.1,91.9 1219.4,95.4 1224.8,97.3 1230.1,93.8 1235.5,92.9 1240.8,96.7 1246.2,98.8 1251.5,92.1 1256.9,95.0 1262.2,95.9 1267.6,92.1 1272.9,96.3 1278.3,97.8 1283.6,92.5 1289.0,95.9 1294.3,97.8 1299.7,92.9 1305.0,95.0 1310.4,96.9 1315.7,92.9 1321.1,95.0 1326.4,97.8 1331.8,93.4 1337.1,94.8 1342.5,95.5 1347.8,94.8 1352.6,96.3" fill="none" stroke="#dd7a33" stroke-width="2" stroke-linejoin="round" stroke-linecap="round"/><rect x="817.5" y="68.5" width="579" height="255" fill="none" stroke="#757575" stroke-width="1" shape-rendering="crispEdges"/></svg>
<div class="cl r" style="left:712px;width:100px;top:75px;text-align:right">305</div>
<div class="cl r" style="left:712px;width:100px;top:136px;text-align:right">228</div>
<div class="cl r" style="left:712px;width:100px;top:197px;text-align:right">152</div>
<div class="cl r" style="left:712px;width:100px;top:257px;text-align:right">76</div>
<div class="cl r" style="left:712px;width:100px;top:318px;text-align:right">0.0</div>
<div class="cl" style="left:788px;width:60px;text-align:center;top:328px">13:54</div>
<div class="cl" style="left:852px;width:60px;text-align:center;top:328px">13:56</div>
<div class="cl" style="left:916px;width:60px;text-align:center;top:328px">13:58</div>
<div class="cl" style="left:980px;width:60px;text-align:center;top:328px">14:00</div>
<div class="cl" style="left:1044.5px;width:60px;text-align:center;top:328px">14:02</div>
<div class="cl" style="left:1109px;width:60px;text-align:center;top:328px">14:04</div>
<div class="cl" style="left:1173px;width:60px;text-align:center;top:328px">14:06</div>
<div class="cl" style="left:1237px;width:60px;text-align:center;top:328px">14:08</div>
<div class="cl" style="left:1301px;width:60px;text-align:center;top:328px">14:10</div>
<div class="cl" style="left:1366px;width:60px;text-align:center;top:328px">14:12</div>
<div class="a" style="left:1076px;width:60px;text-align:center;top:344px;font-size:12px;color:#999;line-height:14px">Time</div>
<div class="a" style="left:672px;top:198px;width:200px;height:14px;line-height:14px;text-align:center;font-size:12px;color:#999;transform:rotate(-90deg);white-space:nowrap">Throughput, Mbps</div>
<div class="a" style="left:1341px;top:73px;width:51px;height:29px;background:rgba(255,255,255,0.85)"></div>
<div class="a" style="left:1341px;top:74px;width:13px;height:13px;border:1px solid #ccc;background:#fff;padding:1px"><div style="width:9px;height:9px;background:#dd7a33"></div></div>
<div class="cl" style="left:1355.5px;top:75.5px;color:#979797;font-size:10px">Rx data</div>
<div class="a" style="left:1341px;top:88px;width:13px;height:13px;border:1px solid #ccc;background:#fff;padding:1px"><div style="width:9px;height:9px;background:#fbd07a"></div></div>
<div class="cl" style="left:1355.5px;top:89.5px;color:#979797;font-size:10px">Tx data</div>
<div class="ct" style="left:762px;top:366px">Wireless packets per second (last 15 min)</div>
<div class="hr" style="left:762px;top:389px;width:643px"></div>
<svg class="a" style="left:0;top:0" width="1413" height="918"><path d="M882.5 415V670M946.5 415V670M1010.5 415V670M1074.5 415V670M1139.5 415V670M1203.5 415V670M1267.5 415V670M1331.5 415V670M817 440.5H1397M817 486.5H1397M817 532.5H1397M817 578.5H1397M817 624.5H1397M817 670.5H1397" stroke="#dcdcdc" stroke-width="1" fill="none" shape-rendering="crispEdges"/><polyline points="882.4,450.3 887.8,455.0 893.1,457.5 898.5,447.4 903.8,449.9 909.2,452.7 914.5,451.8 919.9,455.6 925.2,456.6 930.6,453.7 935.9,455.6 941.3,456.6 946.6,450.8 952.0,455.6 957.3,458.9 962.7,450.4 968.0,452.4 973.4,454.7 978.7,449.5 984.1,450.4 989.4,452.7 994.8,453.7 1000.1,451.4 1005.5,456.2 1010.8,458.5 1016.2,453.1 1021.5,453.5 1026.9,453.9 1032.2,450.4 1037.6,455.0 1042.9,459.4 1048.3,455.6 1053.6,461.3 1059.0,461.7 1064.3,455.6 1069.7,456.6 1075.0,458.5 1080.4,459.4 1085.7,462.7 1091.1,466.5 1096.4,457.5 1101.8,457.1 1107.1,462.7 1112.5,460.0 1117.9,452.7 1123.2,456.9 1128.6,460.0 1133.8,452.4 1139.2,455.6 1144.5,457.5 1149.9,452.7 1155.2,455.6 1160.6,457.1 1165.9,452.4 1171.3,456.6 1176.6,458.9 1182.0,450.3 1187.3,454.7 1192.7,458.9 1198.0,456.2 1203.4,461.3 1208.7,460.0 1214.1,449.3 1219.4,453.1 1224.8,457.5 1230.1,453.7 1235.5,447.0 1240.8,454.3 1246.2,457.5 1251.5,448.9 1256.9,457.5 1262.2,460.0 1267.6,451.2 1272.9,456.6 1278.3,457.5 1283.6,448.5 1289.0,454.7 1294.3,459.0 1299.7,448.9 1305.0,451.4 1310.4,454.3 1315.7,449.9 1321.1,454.7 1326.4,459.0 1331.8,455.6 1337.1,456.9 1352.6,453.1" fill="none" stroke="#fbd07a" stroke-width="2" stroke-linejoin="round" stroke-linecap="round"/><polyline points="882.4,439.6 887.8,441.7 893.1,444.0 898.5,439.6 903.8,441.7 909.2,443.4 914.5,439.6 919.9,441.1 925.2,442.6 930.6,440.1 935.9,443.0 941.3,445.5 946.6,439.6 952.0,441.5 957.3,443.0 962.7,440.1 968.0,443.0 973.4,444.9 978.7,439.6 984.1,440.7 989.4,442.4 994.8,442.4 1000.1,439.8 1005.5,442.6 1010.8,444.5 1016.2,441.1 1021.5,442.2 1026.9,443.4 1032.2,439.2 1037.6,442.1 1042.9,444.3 1048.3,440.1 1053.6,443.0 1059.0,445.9 1064.3,440.7 1069.7,442.2 1075.0,444.0 1080.4,440.5 1085.7,442.2 1091.1,444.0 1096.4,439.6 1101.8,441.1 1107.1,443.6 1112.5,441.5 1117.9,439.2 1123.2,441.7 1128.6,444.0 1133.8,440.1 1139.2,443.0 1144.5,444.3 1149.9,439.8 1155.2,441.5 1160.6,443.4 1165.9,441.7 1171.3,442.6 1176.6,444.0 1182.0,439.6 1187.3,441.5 1192.7,442.1 1198.0,438.6 1203.4,444.0 1208.7,444.9 1214.1,438.6 1219.4,442.1 1224.8,444.0 1230.1,440.5 1235.5,439.6 1240.8,443.4 1246.2,445.5 1251.5,438.8 1256.9,441.7 1262.2,442.6 1267.6,438.8 1272.9,443.0 1278.3,444.5 1283.6,439.2 1289.0,442.6 1294.3,444.5 1299.7,439.6 1305.0,441.7 1310.4,443.6 1315.7,439.6 1321.1,441.7 1326.4,444.5 1331.8,440.1 1337.1,441.5 1342.5,442.2 1347.8,441.5 1352.6,443.0" fill="none" stroke="#dd7a33" stroke-width="2" stroke-linejoin="round" stroke-linecap="round"/><rect x="817.5" y="415.5" width="579" height="255" fill="none" stroke="#757575" stroke-width="1" shape-rendering="crispEdges"/></svg>
<div class="cl r" style="left:712px;width:100px;top:435px;text-align:right">25000</div>
<div class="cl r" style="left:712px;width:100px;top:481px;text-align:right">20000</div>
<div class="cl r" style="left:712px;width:100px;top:527px;text-align:right">15000</div>
<div class="cl r" style="left:712px;width:100px;top:573px;text-align:right">10000</div>
<div class="cl r" style="left:712px;width:100px;top:619px;text-align:right">5000</div>
<div class="cl r" style="left:712px;width:100px;top:665px;text-align:right">0.0</div>
<div class="cl" style="left:788px;width:60px;text-align:center;top:675px">13:54</div>
<div class="cl" style="left:852px;width:60px;text-align:center;top:675px">13:56</div>
<div class="cl" style="left:916px;width:60px;text-align:center;top:675px">13:58</div>
<div class="cl" style="left:980px;width:60px;text-align:center;top:675px">14:00</div>
<div class="cl" style="left:1044.5px;width:60px;text-align:center;top:675px">14:02</div>
<div class="cl" style="left:1109px;width:60px;text-align:center;top:675px">14:04</div>
<div class="cl" style="left:1173px;width:60px;text-align:center;top:675px">14:06</div>
<div class="cl" style="left:1237px;width:60px;text-align:center;top:675px">14:08</div>
<div class="cl" style="left:1301px;width:60px;text-align:center;top:675px">14:10</div>
<div class="cl" style="left:1366px;width:60px;text-align:center;top:675px">14:12</div>
<div class="a" style="left:1076px;width:60px;text-align:center;top:691px;font-size:12px;color:#999;line-height:14px">Time</div>
<div class="a" style="left:672px;top:545px;width:200px;height:14px;line-height:14px;text-align:center;font-size:12px;color:#999;transform:rotate(-90deg);white-space:nowrap">Packets per second</div>
<div class="a" style="left:1326px;top:420px;width:66px;height:29px;background:rgba(255,255,255,0.85)"></div>
<div class="a" style="left:1326px;top:421px;width:13px;height:13px;border:1px solid #ccc;background:#fff;padding:1px"><div style="width:9px;height:9px;background:#dd7a33"></div></div>
<div class="cl" style="left:1340.5px;top:422.5px;color:#979797;font-size:10px">Rx packets</div>
<div class="a" style="left:1326px;top:435px;width:13px;height:13px;border:1px solid #ccc;background:#fff;padding:1px"><div style="width:9px;height:9px;background:#fbd07a"></div></div>
<div class="cl" style="left:1340.5px;top:436.5px;color:#979797;font-size:10px">Tx packets</div>
<div class="ct" style="left:762px;top:728px">ETH1 data throughput (last 15 min)</div>
<div class="hr" style="left:762px;top:751px;width:643px"></div>
<svg class="a" style="left:0;top:0" width="1413" height="918"><path d="M882.5 777V950M946.5 777V950M1010.5 777V950M1074.5 777V950M1139.5 777V950M1203.5 777V950M1267.5 777V950M1331.5 777V950M817 790.5H1397M817 851.5H1397M817 912.5H1397" stroke="#dcdcdc" stroke-width="1" fill="none" shape-rendering="crispEdges"/><polyline points="882.4,801.9 887.8,803.4 893.1,805.9 898.5,803.8 903.8,804.8 909.2,806.3 914.5,802.9 919.9,804.0 925.2,805.9 930.6,802.5 935.9,806.7 941.3,807.3 946.6,802.5 952.0,805.0 957.3,805.0 962.7,801.0 968.0,806.7 973.4,808.8 978.7,801.1 984.1,804.0 989.4,806.7 994.8,805.0 1000.1,803.1 1005.5,805.9 1010.8,808.2 1016.2,803.8 1021.5,804.8 1026.9,806.3 1032.2,803.1 1037.6,805.0 1042.9,807.3 1048.3,803.4 1053.6,806.3 1059.0,809.2 1064.3,802.1 1069.7,805.4 1075.0,806.7 1080.4,802.9 1085.7,805.0 1091.1,807.3 1096.4,801.1 1101.8,804.4 1107.1,807.3 1112.5,804.0 1117.9,802.5 1123.2,805.9 1128.6,806.3 1133.8,802.1 1139.2,806.3 1144.5,808.2 1149.9,803.8 1155.2,804.4 1160.6,805.9 1165.9,804.8 1171.3,805.0 1176.6,806.3 1182.0,803.1 1187.3,803.8 1192.7,805.0 1198.0,802.1 1203.4,807.3 1208.7,809.2 1214.1,800.6 1219.4,804.4 1224.8,807.6 1230.1,803.1 1235.5,801.5 1240.8,807.3 1246.2,806.7 1251.5,801.1 1256.9,805.9 1262.2,804.8 1267.6,802.1 1272.9,806.9 1278.3,806.7 1283.6,801.9 1289.0,805.9 1294.3,807.6 1299.7,803.8 1305.0,804.4 1310.4,806.3 1315.7,803.4 1321.1,804.8 1326.4,806.7 1331.8,803.4 1337.1,804.4 1342.5,805.2 1347.8,804.4 1352.6,805.5" fill="none" stroke="#fbd07a" stroke-width="2" stroke-linejoin="round" stroke-linecap="round"/><polyline points="882.4,811.1 887.8,810.3 893.1,810.1 898.5,810.5 903.8,808.8 909.2,811.1 914.5,814.3 919.9,815.1 925.2,815.5 930.6,815.7 935.9,814.9 941.3,813.4 946.6,813.0 952.0,814.1 957.3,813.6 962.7,811.1 968.0,811.7 973.4,812.6 978.7,811.5 984.1,812.8 989.4,814.0 994.8,813.6 1000.1,813.2 1005.5,814.3 1010.8,815.3 1016.2,813.6 1021.5,812.0 1026.9,812.8 1032.2,813.0 1037.6,813.4 1042.9,815.9 1048.3,817.8 1053.6,819.1 1059.0,817.4 1064.3,816.6 1069.7,818.2 1075.0,819.7 1080.4,821.6 1085.7,818.9 1091.1,820.1 1096.4,819.3 1101.8,817.8 1107.1,820.8 1112.5,817.4 1117.9,815.3 1123.2,815.1 1128.6,814.1 1133.8,814.1 1139.2,814.0 1144.5,814.0 1149.9,815.9 1155.2,814.9 1160.6,815.5 1165.9,814.0 1171.3,812.4 1176.6,811.7 1182.0,813.4 1187.3,813.0 1192.7,816.2 1198.0,819.3 1203.4,817.8 1208.7,814.5 1214.1,811.1 1219.4,811.7 1224.8,813.0 1230.1,809.7 1235.5,808.8 1240.8,810.7 1246.2,809.7 1251.5,811.1 1256.9,814.0 1262.2,811.7 1267.6,813.6 1272.9,814.3 1278.3,811.1 1283.6,810.9 1289.0,810.5 1294.3,810.9 1299.7,812.0 1305.0,809.7 1310.4,812.4 1315.7,813.0 1321.1,811.7 1326.4,814.9 1331.8,818.3 1337.1,817.4 1342.5,814.0 1347.8,815.9 1352.6,815.3" fill="none" stroke="#dd7a33" stroke-width="2" stroke-linejoin="round" stroke-linecap="round"/><rect x="817.5" y="777.5" width="579" height="173" fill="none" stroke="#757575" stroke-width="1" shape-rendering="crispEdges"/></svg>
<div class="cl r" style="left:712px;width:100px;top:785px;text-align:right">305</div>
<div class="cl r" style="left:712px;width:100px;top:846px;text-align:right">228</div>
<div class="cl r" style="left:712px;width:100px;top:907px;text-align:right">152</div>
<div class="a" style="left:672px;top:907px;width:200px;height:14px;line-height:14px;text-align:center;font-size:12px;color:#999;transform:rotate(-90deg);white-space:nowrap">Throughput, Mbps</div>
<div class="a" style="left:1341px;top:782px;width:51px;height:29px;background:rgba(255,255,255,0.85)"></div>
<div class="a" style="left:1341px;top:783px;width:13px;height:13px;border:1px solid #ccc;background:#fff;padding:1px"><div style="width:9px;height:9px;background:#dd7a33"></div></div>
<div class="cl" style="left:1355.5px;top:784.5px;color:#979797;font-size:10px">Rx data</div>
<div class="a" style="left:1341px;top:797px;width:13px;height:13px;border:1px solid #ccc;background:#fff;padding:1px"><div style="width:9px;height:9px;background:#fbd07a"></div></div>
<div class="cl" style="left:1355.5px;top:798.5px;color:#979797;font-size:10px">Tx data</div>
</body></html>
